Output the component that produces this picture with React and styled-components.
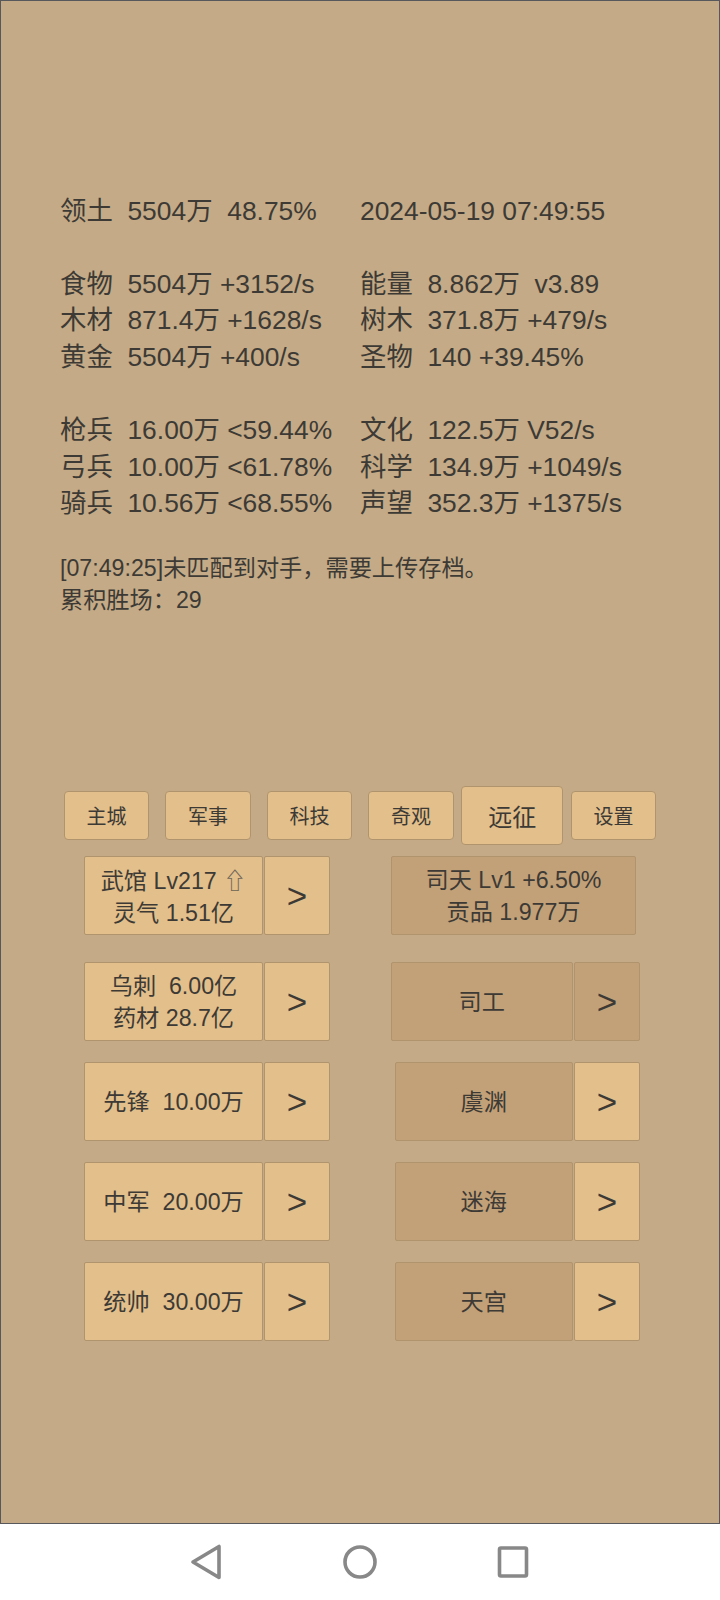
import React from "react";
import styled, { createGlobalStyle } from "styled-components";

const Global = createGlobalStyle`
  html, body { margin: 0; padding: 0; background: #fff; }
  body { font-family: "Liberation Sans", "Noto Sans CJK SC", sans-serif; color: #3d3a35; }
`;

const Panel = styled.main`
  box-sizing: border-box;
  width: 720px;
  height: 1524px;
  padding-top: 191.5px;
  background: #c4aa86;
  border: 1px solid #56585c;
`;

const Stats = styled.section`
  padding-left: 59px;
  display: grid;
  grid-template-columns: 300px 1fr;
  grid-auto-rows: 36.6px;
  font-size: 26.4px;
  line-height: 36.6px;
  white-space: pre;
`;

const Log = styled.section`
  margin: 30px 0 0 59px;
  font-size: 23.2px;
  line-height: 32px;
`;

const Tabs = styled.nav`
  margin-top: 171px;
  height: 58px;
  display: flex;
  align-items: center;
  justify-content: center;
`;

const Tab = styled.div`
  box-sizing: border-box;
  width: ${(p) => (p.$active ? "102px" : "85.5px")};
  height: ${(p) => (p.$active ? "59px" : "49px")};
  margin-right: ${(p) => p.$gap}px;
  display: flex;
  align-items: center;
  justify-content: center;
  background: #e2bf8b;
  border: 1px solid #b0946e;
  border-radius: 4px;
  font-size: ${(p) => (p.$active ? "24px" : "20px")};
`;

const Rows = styled.section`
  margin-top: 11px;
  padding: 0 79px 0 83px;
  display: flex;
  flex-direction: column;
`;

const Row = styled.div`
  display: flex;
  justify-content: space-between;
  margin-bottom: ${(p) => p.$after}px;
`;

const Group = styled.div`
  display: flex;
  gap: 1px;
  margin-right: ${(p) => p.$inset || 0}px;
`;

const Btn = styled.div`
  box-sizing: border-box;
  width: ${(p) => p.$w}px;
  height: 79px;
  padding-top: 1px;
  display: flex;
  flex-direction: column;
  align-items: center;
  justify-content: center;
  background: ${(p) => (p.$dim ? "#c2a178" : "#e2bf8b")};
  border: 1px solid #b0946e;
  border-radius: 2px;
  font-size: 23.2px;
  line-height: 32px;
  white-space: pre;
`;

const Arrow = styled(Btn)`
  width: 66px;
  font-size: 35px;
`;

const Up = styled.span`
  font-family: "Noto Sans CJK SC", sans-serif;
  color: #6d6457;
`;

const NavBar = styled.footer`
  height: 76px;
  background: #fff;
  display: flex;
  align-items: center;
  justify-content: center;
  gap: 118px;
`;

const NavIcon = styled.svg`
  width: 36px;
  height: 36px;
  fill: none;
  stroke: #888;
  stroke-width: 3.6;
  stroke-linejoin: round;
`;

const stats = [
  ["领土  5504万  48.75%", "2024-05-19 07:49:55"],
  ["", ""],
  ["食物  5504万 +3152/s", "能量  8.862万  v3.89"],
  ["木材  871.4万 +1628/s", "树木  371.8万 +479/s"],
  ["黄金  5504万 +400/s", "圣物  140 +39.45%"],
  ["", ""],
  ["枪兵  16.00万 <59.44%", "文化  122.5万 V52/s"],
  ["弓兵  10.00万 <61.78%", "科学  134.9万 +1049/s"],
  ["骑兵  10.56万 <68.55%", "声望  352.3万 +1375/s"],
];

const tabs = [
  ["主城", 16],
  ["军事", 16],
  ["科技", 16],
  ["奇观", 7.5],
  ["远征", 7.5, true],
  ["设置", 0],
];

export default function App() {
  return (
    <>
      <Global />
      <Panel>
        <Stats>
          {stats.flat().map((t, i) => (
            <div key={i}>{t}</div>
          ))}
        </Stats>
        <Log>
          <div>[07:49:25]未匹配到对手，需要上传存档。</div>
          <div>累积胜场：29</div>
        </Log>
        <Tabs>
          {tabs.map(([t, g, a]) => (
            <Tab key={t} $gap={g} $active={a}>
              {t}
            </Tab>
          ))}
        </Tabs>
        <Rows>
          <Row $after={27}>
            <Group>
              <Btn $w={179}>
                <div>
                  武馆 Lv217 <Up>⇧</Up>
                </div>
                <div>灵气 1.51亿</div>
              </Btn>
              <Arrow>&gt;</Arrow>
            </Group>
            <Group $inset={4}>
              <Btn $w={245} $dim>
                <div>司天 Lv1 +6.50%</div>
                <div>贡品 1.977万</div>
              </Btn>
            </Group>
          </Row>
          <Row $after={21}>
            <Group>
              <Btn $w={179}>
                <div>乌刺  6.00亿</div>
                <div>药材 28.7亿</div>
              </Btn>
              <Arrow>&gt;</Arrow>
            </Group>
            <Group>
              <Btn $w={182.5} $dim>司工</Btn>
              <Arrow $dim>&gt;</Arrow>
            </Group>
          </Row>
          <Row $after={21}>
            <Group>
              <Btn $w={179}>先锋  10.00万</Btn>
              <Arrow>&gt;</Arrow>
            </Group>
            <Group>
              <Btn $w={178.5} $dim>虞渊</Btn>
              <Arrow>&gt;</Arrow>
            </Group>
          </Row>
          <Row $after={21}>
            <Group>
              <Btn $w={179}>中军  20.00万</Btn>
              <Arrow>&gt;</Arrow>
            </Group>
            <Group>
              <Btn $w={178.5} $dim>迷海</Btn>
              <Arrow>&gt;</Arrow>
            </Group>
          </Row>
          <Row $after={0}>
            <Group>
              <Btn $w={179}>统帅  30.00万</Btn>
              <Arrow>&gt;</Arrow>
            </Group>
            <Group>
              <Btn $w={178.5} $dim>天宫</Btn>
              <Arrow>&gt;</Arrow>
            </Group>
          </Row>
        </Rows>
      </Panel>
      <NavBar>
        <NavIcon viewBox="0 0 36 36">
          <path d="M31 2.5 V33.5 L5 18 Z" />
        </NavIcon>
        <NavIcon viewBox="0 0 36 36">
          <circle cx="18" cy="18" r="15" />
        </NavIcon>
        <NavIcon viewBox="0 0 36 36">
          <rect x="3.5" y="4" width="27" height="28" rx="1.5" />
        </NavIcon>
      </NavBar>
    </>
  );
}
